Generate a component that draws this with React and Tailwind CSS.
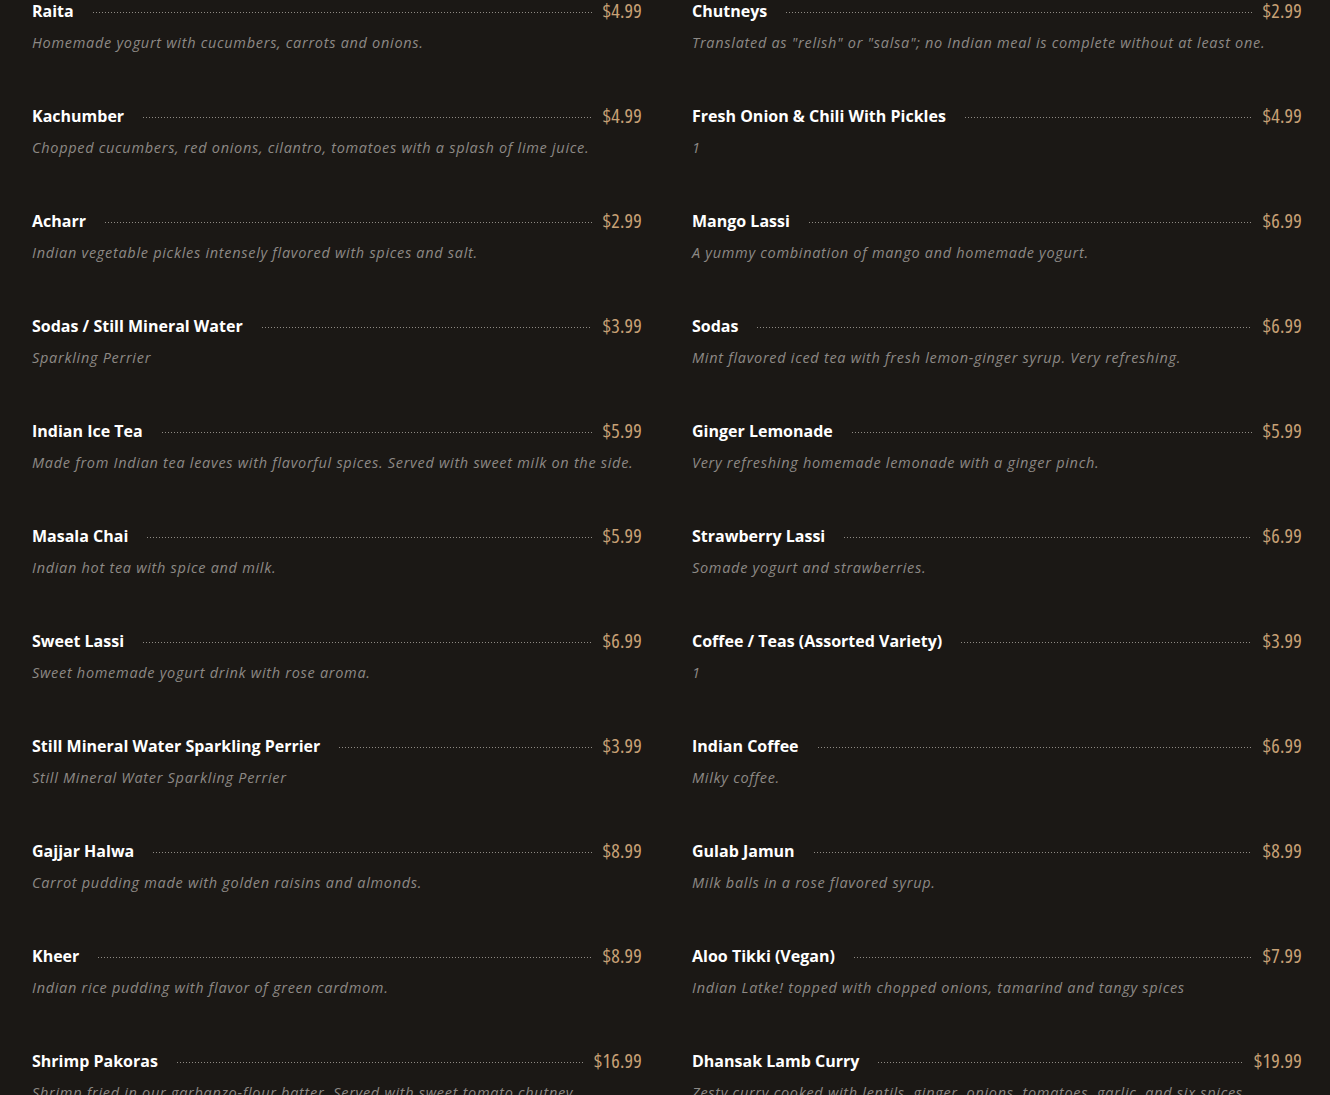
const left = [
  ["Raita", "$4.99", "Homemade yogurt with cucumbers, carrots and onions."],
  ["Kachumber", "$4.99", "Chopped cucumbers, red onions, cilantro, tomatoes with a splash of lime juice."],
  ["Acharr", "$2.99", "Indian vegetable pickles intensely flavored with spices and salt."],
  ["Sodas / Still Mineral Water", "$3.99", "Sparkling Perrier"],
  ["Indian Ice Tea", "$5.99", "Made from Indian tea leaves with flavorful spices. Served with sweet milk on the side."],
  ["Masala Chai", "$5.99", "Indian hot tea with spice and milk."],
  ["Sweet Lassi", "$6.99", "Sweet homemade yogurt drink with rose aroma."],
  ["Still Mineral Water Sparkling Perrier", "$3.99", "Still Mineral Water Sparkling Perrier"],
  ["Gajjar Halwa", "$8.99", "Carrot pudding made with golden raisins and almonds."],
  ["Kheer", "$8.99", "Indian rice pudding with flavor of green cardmom."],
  ["Shrimp Pakoras", "$16.99", "Shrimp fried in our garbanzo-flour batter. Served with sweet tomato chutney."],
];

const right = [
  ["Chutneys", "$2.99", "Translated as \"relish\" or \"salsa\"; no Indian meal is complete without at least one."],
  ["Fresh Onion & Chili With Pickles", "$4.99", "1"],
  ["Mango Lassi", "$6.99", "A yummy combination of mango and homemade yogurt."],
  ["Sodas", "$6.99", "Mint flavored iced tea with fresh lemon-ginger syrup. Very refreshing."],
  ["Ginger Lemonade", "$5.99", "Very refreshing homemade lemonade with a ginger pinch."],
  ["Strawberry Lassi", "$6.99", "Somade yogurt and strawberries."],
  ["Coffee / Teas (Assorted Variety)", "$3.99", "1"],
  ["Indian Coffee", "$6.99", "Milky coffee."],
  ["Gulab Jamun", "$8.99", "Milk balls in a rose flavored syrup."],
  ["Aloo Tikki (Vegan)", "$7.99", "Indian Latke! topped with chopped onions, tamarind and tangy spices"],
  ["Dhansak Lamb Curry", "$19.99", "Zesty curry cooked with lentils, ginger, onions, tomatoes, garlic, and six spices."],
];

function MenuItem({ name, price, desc }) {
  return (
    <div className="h-[105px]">
      <div className="flex items-center h-[22px]">
        <h3 className="text-[16px] font-bold text-white font-['Open_Sans',sans-serif] whitespace-nowrap leading-[22px]">
          {name}
        </h3>
        <div className="flex-1 ml-[19px] mr-[11px] h-px translate-y-[1px] bg-[linear-gradient(to_right,#8f8a84_1px,transparent_1px)] bg-size-[3px_1px]" />
        <span className="text-[20px] text-[#c8a176] font-['Open_Sans',sans-serif] font-stretch-semi-condensed tracking-[0.2px] leading-[22px]">
          {price}
        </span>
      </div>
      <p className="mt-[10px] text-[14.5px] italic text-[#8d8985] font-['Open_Sans',sans-serif] tracking-[0.7px] leading-[22px] whitespace-nowrap">
        {desc}
      </p>
    </div>
  );
}

export default function App() {
  return (
    <div className="w-[1330px] h-[1095px] overflow-hidden bg-[#1b1815] pl-[32px] pr-[28px]">
      <div className="grid grid-cols-2 gap-x-[50px]">
        <div>
          {left.map(([n, p, d]) => (
            <MenuItem key={n} name={n} price={p} desc={d} />
          ))}
        </div>
        <div>
          {right.map(([n, p, d]) => (
            <MenuItem key={n} name={n} price={p} desc={d} />
          ))}
        </div>
      </div>
    </div>
  );
}
